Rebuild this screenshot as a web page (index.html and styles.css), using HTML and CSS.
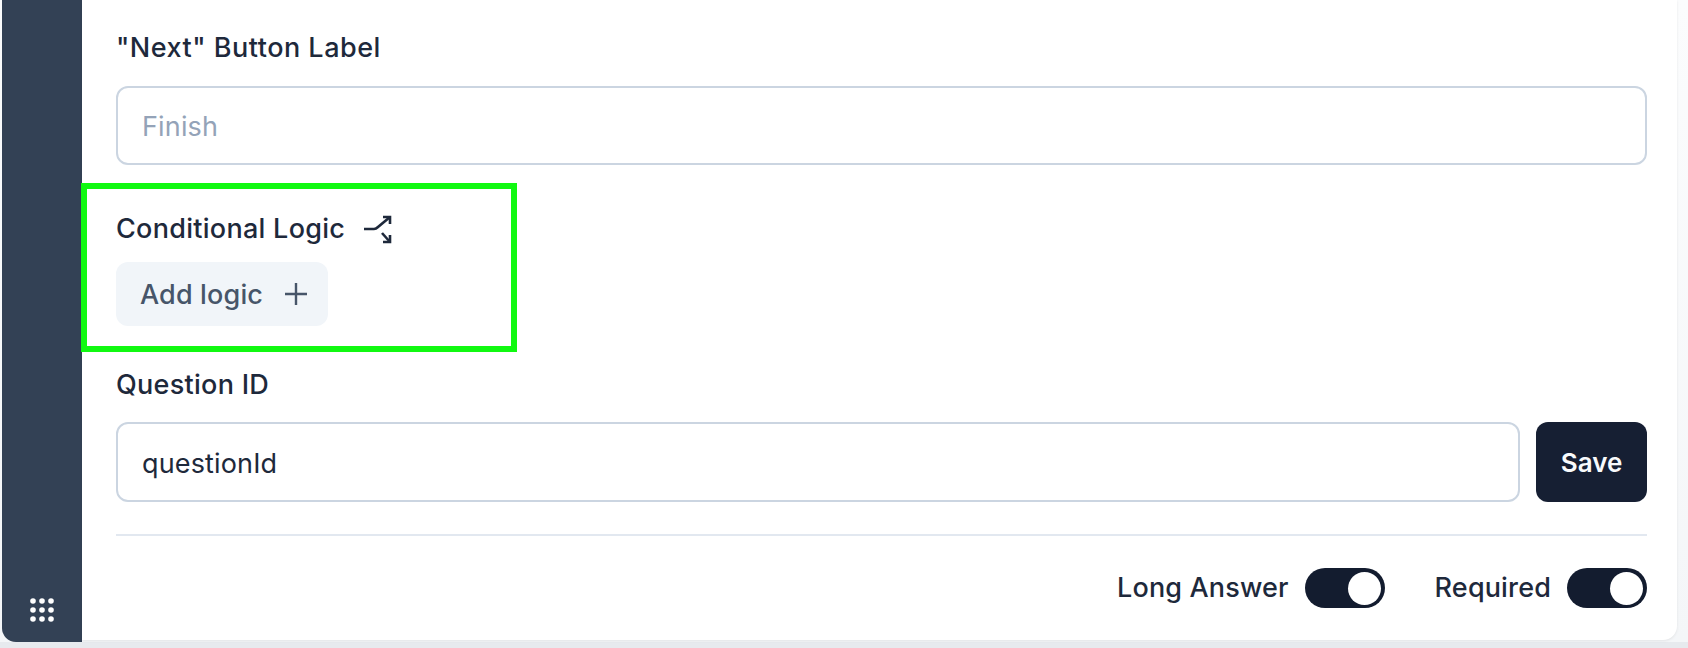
FILE: index.html
```html
<!DOCTYPE html>
<html lang="en">
<head>
    <meta charset="UTF-8">
    <meta name="viewport" content="width=device-width, initial-scale=1.0">
    <title>Question Settings</title>
    <link rel="stylesheet" href="styles.css">
</head>
<body>
    <div class="app">
        <!-- Dark strip with the drag handle -->
        <div class="sidebar">
            <svg class="grid-icon" width="26" height="26" viewBox="0 0 26 26" fill="#fff">
                <circle cx="4" cy="4" r="2.8"/><circle cx="13" cy="4" r="2.8"/><circle cx="22" cy="4" r="2.8"/>
                <circle cx="4" cy="13" r="2.8"/><circle cx="13" cy="13" r="2.8"/><circle cx="22" cy="13" r="2.8"/>
                <circle cx="4" cy="22" r="2.8"/><circle cx="13" cy="22" r="2.8"/><circle cx="22" cy="22" r="2.8"/>
            </svg>
        </div>

        <div class="card">
            <div class="field">
                <label class="label label-wide">"Next" Button Label</label>
                <input class="input" type="text" placeholder="Finish">
            </div>

            <div class="logic-box">
                <div class="logic-title">
                    <span class="label">Conditional Logic</span>
                    <svg class="split-icon" width="30" height="30" viewBox="0 0 30 30" fill="none" stroke="#1e293b" stroke-width="2.6">
                        <path d="M1 15H11Q13 15 15 13L27 3"/>
                        <path d="M20 3H27V10"/>
                        <path d="M19 19L27 28"/>
                        <path d="M27 21V28H20"/>
                    </svg>
                </div>
                <button class="add-btn">
                    Add logic
                    <svg width="26" height="26" viewBox="0 0 26 26" fill="none" stroke="#475569" stroke-width="2.4">
                        <path d="M13 2V24M2 13H24"/>
                    </svg>
                </button>
            </div>

            <div class="field id-field">
                <label class="label">Question ID</label>
                <div class="id-row">
                    <input class="input" type="text" value="questionId">
                    <button class="save-btn">Save</button>
                </div>
            </div>

            <div class="footer">
                <div class="toggle-group">
                    <span class="label">Long Answer</span>
                    <div class="toggle"><span class="knob"></span></div>
                </div>
                <div class="toggle-group">
                    <span class="label">Required</span>
                    <div class="toggle"><span class="knob"></span></div>
                </div>
            </div>
        </div>
    </div>
</body>
</html>
```

FILE: styles.css
```css
* {
    box-sizing: border-box;
    margin: 0;
    padding: 0;
}

html, body {
    height: 648px;
    overflow: hidden;
}

body {
    font-family: Inter, "Liberation Sans", sans-serif;
    background-color: #e7eaee;
    color: #1e293b;
}

.app {
    display: flex;
    height: 642px;
    padding: 0 11px 0 2px;
    background: linear-gradient(#fbfcfd, #f4f6f8);
}

.sidebar {
    width: 80px;
    flex-shrink: 0;
    display: flex;
    justify-content: center;
    align-items: flex-end;
    padding-bottom: 19px;
    background-color: #334155;
    border-bottom-left-radius: 14px;
}

.card {
    flex: 1;
    min-width: 0;
    margin-bottom: 2px;
    padding: 30px 30px 0 34px;
    background: white;
    border-bottom-right-radius: 14px;
    box-shadow: 0 1px 3px rgba(0,0,0,0.08);
}

.label {
    display: block;
    font-size: 27px;
    font-weight: 500;
    letter-spacing: 0.15px;
    line-height: 36px;
    color: #1e293b;
}

.label-wide {
    letter-spacing: 0.5px;
}

.input {
    display: block;
    width: 100%;
    height: 79px;
    margin-top: 20px;
    padding: 2px 24px 0;
    border: 2px solid #cbd5e1;
    border-radius: 12px;
    font-family: inherit;
    font-size: 27px;
    letter-spacing: 0.15px;
    color: #1e293b;
    background: white;
}

.input::placeholder {
    color: #94a3b8;
}

/* green highlight around the logic section */
.logic-box {
    width: 436px;
    height: 169px;
    margin: 18px 0 0 -35px;
    padding: 22px 0 0 29px;
    border: 6px solid #11f911;
}

.logic-title {
    display: flex;
    align-items: center;
    gap: 18px;
}

.logic-title .label,
.id-field .label {
    letter-spacing: 0.28px;
}

.add-btn {
    display: flex;
    align-items: center;
    gap: 20px;
    width: 212px;
    height: 64px;
    margin-top: 15px;
    padding-left: 24px;
    border: none;
    border-radius: 12px;
    background-color: #f1f5f9;
    font-family: inherit;
    font-size: 27px;
    font-weight: 500;
    letter-spacing: 0.15px;
    color: #475569;
}

.id-field {
    margin-top: 15px;
}

.id-row {
    display: flex;
    gap: 16px;
    margin-top: 19px;
}

.id-row .input {
    flex: 1;
    margin-top: 0;
    height: 80px;
}

.save-btn {
    width: 111px;
    height: 80px;
    border: none;
    border-radius: 12px;
    background-color: #161f33;
    font-family: inherit;
    font-size: 26px;
    font-weight: 600;
    color: #f8fafc;
}

.footer {
    display: flex;
    justify-content: flex-end;
    gap: 50px;
    margin-top: 32px;
    padding-top: 32px;
    border-top: 2px solid #e2e8f0;
}

.toggle-group {
    display: flex;
    align-items: center;
    gap: 16px;
}

.toggle {
    display: flex;
    justify-content: flex-end;
    align-items: center;
    width: 80px;
    height: 40px;
    padding-right: 4px;
    border-radius: 20px;
    background-color: #131c2f;
}

.knob {
    width: 33px;
    height: 33px;
    border-radius: 50%;
    background: white;
}
```
